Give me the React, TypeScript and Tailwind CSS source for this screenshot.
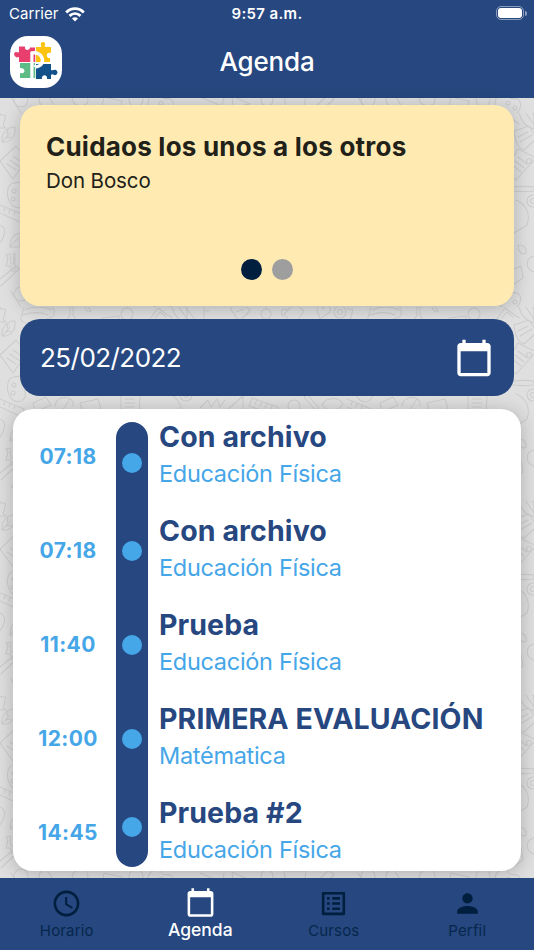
import { MdCalendarToday, MdListAlt, MdPerson, MdSchedule } from 'react-icons/md'

interface AgendaItem {
  time: string
  title: string
  subject: string
  dotClass: string
}

const items: AgendaItem[] = [
  { time: '07:18', title: 'Con archivo', subject: 'Educación Física', dotClass: 'mt-[31px]' },
  { time: '07:18', title: 'Con archivo', subject: 'Educación Física', dotClass: 'mt-[68px]' },
  { time: '11:40', title: 'Prueba', subject: 'Educación Física', dotClass: 'mt-[74px]' },
  { time: '12:00', title: 'PRIMERA EVALUACIÓN', subject: 'Matématica', dotClass: 'mt-[74px]' },
  { time: '14:45', title: 'Prueba #2', subject: 'Educación Física', dotClass: 'mt-[68px]' },
]

function Doodles() {
  return (
    <svg className="absolute inset-0 h-full w-full" aria-hidden="true">
      <defs>
        <pattern id="doodles" x="0" y="113" width="347" height="194" patternUnits="userSpaceOnUse">
          <g fill="none" stroke="#cdcdcd" strokeWidth="1.1" strokeLinecap="round" strokeLinejoin="round">
            {/* left edge */}
            <path d="M2 29c-1-8 4-15 13-15 1 9-4 16-13 15zm0 0l8-9m-5 5l6-1m-4-3l1-4" />
            <path d="M0 48l16-15 11 13-14 20zM10 47l10 7M7 51l9 6M13 43l10 7" />
            <path d="M14 70c-8 1-9 16-1 23 8 5 14-2 12-8s6-9 2-13-8-3-13-2z" />
            <circle cx="14" cy="78" r="2" />
            <circle cx="13" cy="86" r="2" />
            <path d="M0 92l24 10-2 8-22-10M5 95l-1 3m6-1l-1 3m6-1l-1 3" />
            <path d="M0 112c7 3 5 11 0 18M10 134c0-8 4-13 10-14v14zm0 0l8-9" />
            <path d="M6 142l4-1 1 10 3 0-1-10 2-1v18h-4v-5H6l2-8zM0 166l16-13 3 3-18 17" />
            <path d="M0 1c4 4 7-3 5 5s-3 6 1 9H0M11 178l10 16" />
            {/* top row */}
            <path d="M23 3c0-9 29-10 31 0s-6 6-8 10-24 5-25 0 2-5 2-10zm2 0c8-4 19-4 27 0M23 8c9-3 18-3 25 0" />
            <path d="M69 0h6m-5 1v7l-3 5h9l-3-5V1M84-1l4 6 3-1-4-6zM102 11l17-2v6l-16 1z" />
            <circle cx="127" cy="7" r="6" />
            <path d="M127 1l2-4M149 13l9-12 14 10m-17 0l5-6 6 5M178-1l6-1 12 16-6 2zM204-3v19m6-3h15M204 4h5" />
            <path d="M231 0c8-8 14 1 19 2-2 7-8 7-9 11l-5-2c0-6-6-5-5-11zm5 5l8-3" />
            <circle cx="266" cy="7" r="5" />
            <path d="M266 2V-5M284 7L295-4l9 8-7 10-8-1zm-1 2c-4-4 0-9 4-6M317 3c0-7 6-3 6-1 2-5 9-3 7 3l-10 7z" />
            <circle cx="340" cy="5" r="6" />
            <circle cx="340" cy="5" r="2.5" />
            {/* middle row */}
            <path d="M33 96l13-6 5 8-16 7zM55 99c1-12 20-11 18 0M62 104l8-12m10 4l18-4 3 10-18 4z" />
            <path d="M121 88h19l-1 17h-18zM125 92h9M125 96h10M125 100h9" />
            <path d="M200 101l8-8 3 7 6-8 3 8 5-7M226 104l17-15v16z" />
            <path d="M252 91l26 9-2 8-27-9zM257 93l-2 4m7-2l-2 4m7-2l-2 4m7-2l-2 4" />
            <circle cx="294" cy="99" r="6" />
            <path d="M304 90l12 14 3-3-12-14zM322 98c5-9 17-8 21-1-4 7-15 8-21 1z" />
            {/* bottom row */}
            <circle cx="21" cy="181" r="7" />
            <path d="M42 176c-8 5 2 18 12 10l-7-11zM72 181c3-9 16-8 16 0s-13 7-16 0zM104 178l18 4-2 9-18-4z" />
            <circle cx="136" cy="181" r="7" />
            <path d="M200 178l22 9 2-9M232 177l18 8-17 3z" />
            <circle cx="267" cy="181" r="6" />
            <path d="M284 176h22l-2 13h-18zM315 188l14-13 5 5-12 11z" />
            {/* right column */}
            <path d="M154 175c-9 5-8 16 4 20s17-5 15-12-11 0-12-6-4-4-7-2z" />
            <circle cx="161" cy="184" r="2" />
            <circle cx="168" cy="189" r="2" />
            <path d="M172 0c4-6 15-6 15 2v14c-8-2-13-8-15-16zM167 18l15-5 8 12-13 12c-7-2-9-10-10-19zm4 6l10-5m-8 10l12-7M171 36l18 9-20 22-10-10zM171 44l9 7m-12-3l9 7m-12-3l9 7" />
            <circle cx="182" cy="48" r="2.5" />
            <path d="M160 75c10-2 19-2 27-1v4c-9 1-18 1-27-1M169 87c10 4 15 14 11 25l-13 8" />
            <circle cx="186" cy="88" r="6" />
            <circle cx="186" cy="88" r="2.5" />
            <path d="M171 133c4-3 9 2 8 7-4 3-8-2-8-7zM187 143c-9 2-9 13 0 16M167 156l7-3 2 12-9 6" />
          </g>
        </pattern>
      </defs>
      <rect width="100%" height="100%" fill="url(#doodles)" />
    </svg>
  )
}

function Logo() {
  return (
    <svg viewBox="0 0 52 52" className="h-[52px] w-[52px]">
      <rect width="52" height="52" rx="18" fill="#fff" />
      <path fill="#e83f6f" d="M9 10.500h6c-1 4.500 5 4.500 5 1h5v14.500H9v-5c-1 0-2 1-3 0-3-2-2-5 0-5 1 0 2 1 3 0z" />
      <path fill="#fdc311" d="M26 11h5c1-1-1-2 0-4 2-2 5-1 4 2-1 1 0 2 1 2h5v6c-5-2-6 5-1 5v4H26z" />
      <path fill="#5dbb86" d="M10 27h15v15H10v-5c5 2 7-5 0-5z" />
      <path fill="#13518b" d="M26 28h15v6c2 1 3-1 5 0 3 2 1 6-2 5-1-1-2-1-3 0v4h-4c1-5-6-5-5 0h-6z" />
      <path fill="none" stroke="#fff" strokeWidth="3.400" d="M22 43V17c4-1 10 1 10.500 7 0 5-4 7-8.500 7" />
      <path stroke="#e83f6f" strokeWidth="1.500" d="M24.500 19v7" />
      <path stroke="#5dbb86" strokeWidth="1.500" d="M24.500 31v11" />
    </svg>
  )
}

function StatusBar() {
  return (
    <div className="grid h-[28px] grid-cols-3 items-center text-[15px]">
      <div className="flex items-center gap-[6px] pl-[9px]">
        <span className="tracking-[0.05px]">Carrier</span>
        <svg viewBox="0 0 20 15" className="h-[15px] w-5" fill="none" stroke="#fff" strokeWidth="2.8">
          <path d="M1.2 5.4c5-5 12.600-5 17.600 0M4.500 8.900c3.300-3 7.700-3 11 0" />
          <path d="M7 11.500c1.700-1.700 4.300-1.700 6 0l-3 3z" fill="#fff" stroke="none" />
        </svg>
      </div>
      <span className="text-center font-semibold tracking-[0.35px]">9:57 a.m.</span>
      <div className="flex items-center justify-end gap-[1px] pr-[7px] pb-[2px]">
        <div className="h-[14px] w-[28px] rounded-[5px] border border-[#8b9dbc] p-[1px]">
          <div className="h-full rounded-[3px] bg-white" />
        </div>
        <div className="h-[5px] w-[2px] rounded-r-full bg-[#8b9dbc]" />
      </div>
    </div>
  )
}

export default function App() {
  return (
    <div className="relative flex h-[950px] w-[534px] flex-col overflow-hidden bg-[#dfdfdf] font-['Inter',sans-serif]">
      <Doodles />
      <header className="relative h-[98px] shrink-0 bg-[#26477f] text-white">
        <StatusBar />
        <div className="grid grid-cols-[1fr_auto_1fr] items-center pt-2 pl-[10px]">
          <Logo />
          <h1 className="pr-[10px] pb-[2px] text-[26px] font-medium tracking-[-0.15px]">Agenda</h1>
        </div>
      </header>

      <main className="relative flex flex-1 flex-col px-[13px] pt-[7px]">
        <section className="mx-[7px] flex h-[201px] flex-col rounded-[20px] bg-[#ffebb2] px-[26px] pt-[26px] pb-[26px] text-[#212119] shadow-[0_2px_18px_rgba(0,0,0,0.22)]">
          <h2 className="text-[26px] leading-8 font-bold tracking-[0.22px] whitespace-nowrap">Cuidaos los unos a los otros</h2>
          <p className="mt-1 text-[20.500px] leading-7 tracking-[-0.1px]">Don Bosco</p>
          <div className="mt-auto flex justify-center gap-[10px]">
            <span className="h-[21px] w-[21px] rounded-full bg-[#001f3f]" />
            <span className="h-[21px] w-[21px] rounded-full bg-[#9e9e9e]" />
          </div>
        </section>

        <section className="mx-[7px] mt-[13px] flex h-[77px] items-center justify-between rounded-[20px] bg-[#26477f] pr-5 pl-5 text-white">
          <span className="text-[26px] tracking-[-0.55px]">25/02/2022</span>
          <MdCalendarToday className="h-10 w-10" />
        </section>

        <section className="mt-[13px] flex h-[462px] rounded-[20px] bg-white pt-[12px] shadow-[0_2px_18px_rgba(0,0,0,0.22)]">
          <ul className="w-[103px] pt-5">
            {items.map((item, i) => (
              <li key={i} className="h-[94.100px] pl-[7px] text-center text-[21px] leading-8 font-bold tracking-[0.4px] text-[#45a6e8]">
                {item.time}
              </li>
            ))}
          </ul>
          <div className="mt-px flex h-[445px] w-8 flex-col items-center rounded-full bg-[#26477f]">
            {items.map((item, i) => (
              <span key={i} className={`h-5 w-5 shrink-0 rounded-full bg-[#45a6e8] ${item.dotClass}`} />
            ))}
          </div>
          <ul className="pl-[11px] whitespace-nowrap">
            {items.map((item, i) => (
              <li key={i} className="h-[94.100px]">
                <h3 className="text-[28.500px] leading-[32px] font-bold tracking-[0.1px] text-[#26477f]">{item.title}</h3>
                <p className="mt-[5px] text-[23.500px] leading-8 tracking-[-0.3px] text-[#45a6e8]">{item.subject}</p>
              </li>
            ))}
          </ul>
        </section>
      </main>

      <nav className="relative grid h-[72px] shrink-0 grid-cols-4 bg-[#26477f] text-center text-[15px] text-[#001f3f]">
        <div className="flex flex-col items-center pt-[10px]">
          <MdSchedule className="h-[31px] w-[31px]" />
          <span className="leading-6 tracking-[0.15px] opacity-80">Horario</span>
        </div>
        <div className="flex flex-col items-center pt-[9px] text-white">
          <MdCalendarToday className="h-[31px] w-[31px]" />
          <span className="text-[17.500px] leading-[23px] font-medium">Agenda</span>
        </div>
        <div className="flex flex-col items-center pt-[10px]">
          <MdListAlt className="h-[31px] w-[31px]" />
          <span className="leading-6 tracking-[0.15px] opacity-80">Cursos</span>
        </div>
        <div className="flex flex-col items-center pt-[10px]">
          <MdPerson className="h-[31px] w-[31px]" />
          <span className="leading-6 tracking-[0.15px] opacity-80">Perfil</span>
        </div>
      </nav>
    </div>
  )
}
